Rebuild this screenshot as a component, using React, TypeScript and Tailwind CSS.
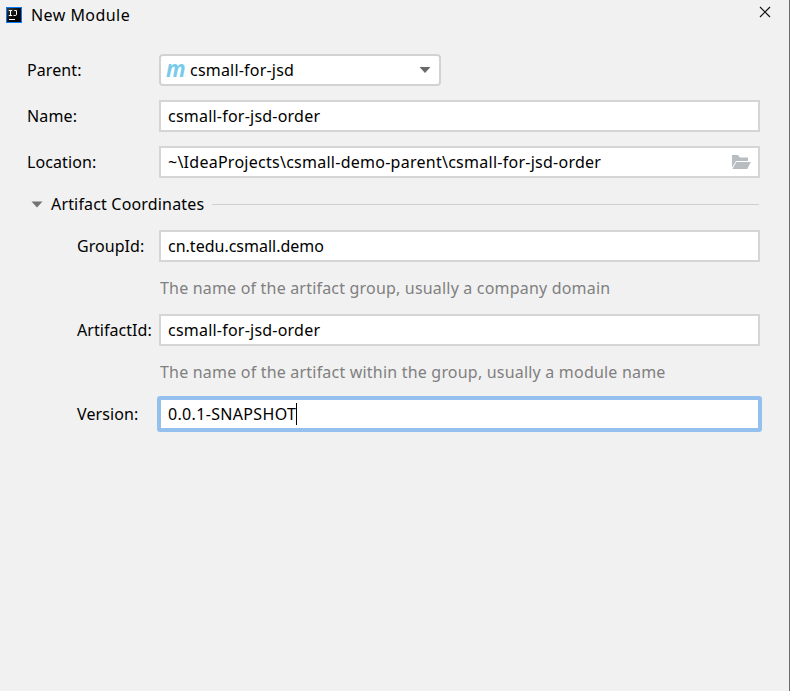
import React from "react";

function Label({ children, className }: { children: string; className: string }) {
  return <span className={`shrink-0 whitespace-nowrap ${className}`}>{children}</span>;
}

function Field({ children, icon }: { children: React.ReactNode; icon?: React.ReactNode }) {
  return (
    <div className="flex h-[32px] w-[601px] shrink-0 items-center justify-between border-2 border-[#d5d5d5] bg-white pr-[7px] pl-[7px]">
      {children}
      {icon}
    </div>
  );
}

function IdeaIcon() {
  return (
    <svg width="16" height="16" viewBox="0 0 16 16" className="shrink-0">
      <defs>
        <linearGradient id="idea-face" x1="0" y1="0" x2="1" y2="1">
          <stop offset="0" stopColor="#3a3a3a" />
          <stop offset="0.6" stopColor="#050505" />
        </linearGradient>
      </defs>
      <rect width="16" height="16" fill="#087cfa" />
      <rect x="1" y="1" width="14" height="14" fill="url(#idea-face)" />
      <path d="M2.8 3.5h3.4M4.5 3.5v5M2.8 8.5h3.4M8.3 3.5h2.2v3.7q0 1.3-1.2 1.3H7.6" fill="none" stroke="#fff" strokeWidth="1" />
      <path d="M3 12.5h6" stroke="#fff" strokeWidth="1" />
    </svg>
  );
}

function FolderIcon() {
  return (
    <svg width="20" height="16" viewBox="0 0 20 16" className="shrink-0">
      <path d="M1 1h6l1.8 2.5H17V7H5L1 13.5z" fill="#b7bdc0" />
      <path d="M5.3 8H19.8l-3.5 7H1.4z" fill="#b7bdc0" />
    </svg>
  );
}

export default function App() {
  return (
    <div className="flex h-[691px] w-[790px] flex-col overflow-hidden border-r border-[#6b6b6b] bg-[#f1f1f1] font-['Noto_Sans','Noto_Sans_CJK_SC',sans-serif] text-[16px] leading-[22px] text-black">
      <header className="flex h-[30px] shrink-0 items-center pl-[6px]">
        <IdeaIcon />
        <span className="ml-[9px] tracking-[0.45px]">New Module</span>
        <svg width="12" height="12" viewBox="0 0 12 12" className="mr-[18px] mb-[6px] ml-auto">
          <path d="M1 1l10 10M11 1L1 11" stroke="#111" strokeWidth="1.2" />
        </svg>
      </header>

      <main className="flex flex-col pt-[17px]">
        <div className="flex h-[46px] items-center pl-[27px]">
          <Label className="w-[132px] tracking-[0.1px]">Parent:</Label>
          <div className="flex h-[32px] w-[282px] items-center rounded-[4px] border-2 border-[#d2d2d2] bg-white pl-[5px]">
            <span className="mb-[5px] w-[24px] shrink-0 text-[24px] leading-[22px] font-bold text-[#78cbea] italic">
              <span className="inline-block origin-left scale-x-[0.9]">m</span>
            </span>
            <span className="tracking-[0.2px]">csmall-for-jsd</span>
            <svg width="12" height="6" viewBox="0 0 12 6" className="mr-[8px] ml-auto">
              <path d="M0.5 0h11L6 6z" fill="#696969" />
            </svg>
          </div>
        </div>

        <div className="flex h-[46px] items-center pl-[27px]">
          <Label className="w-[132px] tracking-[0.15px]">Name:</Label>
          <Field><span className="tracking-[0.22px]">csmall-for-jsd-order</span></Field>
        </div>

        <div className="flex h-[46px] items-center pl-[27px]">
          <Label className="w-[132px] tracking-[0.1px]">Location:</Label>
          <Field icon={<FolderIcon />}>
            <span className="tracking-[0.26px]">~\IdeaProjects\csmall-demo-parent\csmall-for-jsd-order</span>
          </Field>
        </div>

        <div className="flex h-[38px] items-center pr-[30px] pl-[31px]">
          <svg width="12" height="7" viewBox="0 0 12 7" className="shrink-0">
            <path d="M0.5 .5h11L6 6.5z" fill="#737373" />
          </svg>
          <span className="ml-[8px] w-[161px] shrink-0 whitespace-nowrap tracking-[0.17px]">Artifact Coordinates</span>
          <div className="h-px flex-1 bg-[#d0d0d0]" />
        </div>

        <div className="flex h-[46px] items-center pl-[77px]">
          <Label className="w-[82px] tracking-[0.05px]">GroupId:</Label>
          <Field><span>cn.tedu.csmall.demo</span></Field>
        </div>
        <p className="flex h-[38px] items-center pl-[160px] text-[#808080] tracking-[0.19px]">
          The name of the artifact group, usually a company domain
        </p>

        <div className="flex h-[46px] items-center pl-[77px]">
          <Label className="w-[82px] tracking-[0.05px]">ArtifactId:</Label>
          <Field><span className="tracking-[0.22px]">csmall-for-jsd-order</span></Field>
        </div>
        <p className="flex h-[38px] items-center pl-[160px] text-[#808080] tracking-[0.2px]">
          The name of the artifact within the group, usually a module name
        </p>

        <div className="flex h-[46px] items-center pl-[77px]">
          <Label className="w-[80px] tracking-[0.1px]">Version:</Label>
          <div className="flex h-[36px] w-[605px] items-center rounded-[3px] border-4 border-[#94c0ed] bg-white pl-[7px]">
            <span className="tracking-[0.33px]">0.0.1-SNAPSHOT</span>
            <span className="h-[22px] w-px bg-black" />
          </div>
        </div>
      </main>
    </div>
  );
}
